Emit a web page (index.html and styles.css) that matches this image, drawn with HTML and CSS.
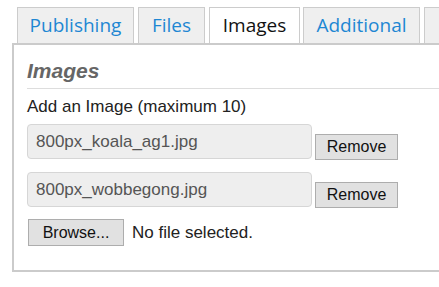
FILE: index.html
```html
<!doctype html>
<html>
<head>
<meta charset="utf-8">
<title>Images</title>
<link rel="stylesheet" href="styles.css">
</head>
<body>
<div class="tabs">
    <a class="tab t-pub" href="javascript:;">Publishing</a>
    <a class="tab t-files" href="javascript:;">Files</a>
    <a class="tab t-img active" href="javascript:;">Images</a>
    <a class="tab t-add" href="javascript:;">Additional</a>
    <a class="tab t-more" href="javascript:;"></a>
</div>
<div class="panel">
    <h2>Images</h2>
    <p class="label">Add an Image (maximum 10)</p>
    <div class="row">
        <input class="file" type="text" value="800px_koala_ag1.jpg" readonly>
        <button class="btn remove">Remove</button>
    </div>
    <div class="row">
        <input class="file" type="text" value="800px_wobbegong.jpg" readonly>
        <button class="btn remove">Remove</button>
    </div>
    <div class="row browse-row">
        <button class="btn browse">Browse...</button>
        <span class="none">No file selected.</span>
    </div>
</div>
</body>
</html>
```

FILE: styles.css
```css
* { padding: 0; margin: 0; box-sizing: border-box; }
html, body { overflow: hidden; }
body { background: #fff; width: 439px; height: 287px; font-family: "Liberation Sans", Arial, sans-serif; }

.tabs { display: flex; gap: 4px; margin-top: 7px; padding-left: 17px; height: 36px; white-space: nowrap; }
.tab { flex: none; display: block; height: 36px; padding-top: 5px; border: 1px solid #ccc; border-bottom: none; background: #efefef; color: #1e87d3; font: 19px/24px "Open Sans", sans-serif; text-align: center; text-decoration: none; }
.tab.active { background: #fff; color: #111; }
.t-pub { width: 117px; }
.t-files { width: 67px; }
.t-img { width: 91px; }
.t-add { width: 117px; margin-left: -1px; }
.t-more { width: 40px; }

.panel { width: 520px; margin-left: 12px; border: 2px solid #cbcbcb; padding: 14px 13px 24px; }
.panel h2 { font: italic bold 21px/23px "Liberation Sans", Arial, sans-serif; color: #666; padding-bottom: 6px; border-bottom: 1px solid #ddd; }
.label { margin-top: 8px; font-size: 17px; line-height: 19px; color: #222; }

.row { display: flex; align-items: flex-end; margin-top: 13px; }
.label + .row { margin-top: 8px; }
.file { width: 285px; height: 35px; border: 1px solid #d6d6d6; border-radius: 4px; background: #eee; padding-left: 8px; font: 17px "Liberation Sans", Arial, sans-serif; color: #555; outline: none; }
.btn { height: 26px; border: 1px solid #adadad; background: #e1e1e1; font: 16px "Liberation Sans", Arial, sans-serif; color: #111; }
.remove { width: 83px; margin-left: 3px; margin-bottom: -1px; }
.browse-row { align-items: center; margin-top: 12px; }
.browse { width: 96px; height: 27px; margin-left: 1px; }
.none { margin-left: 8px; font-size: 17px; color: #222; }
```
